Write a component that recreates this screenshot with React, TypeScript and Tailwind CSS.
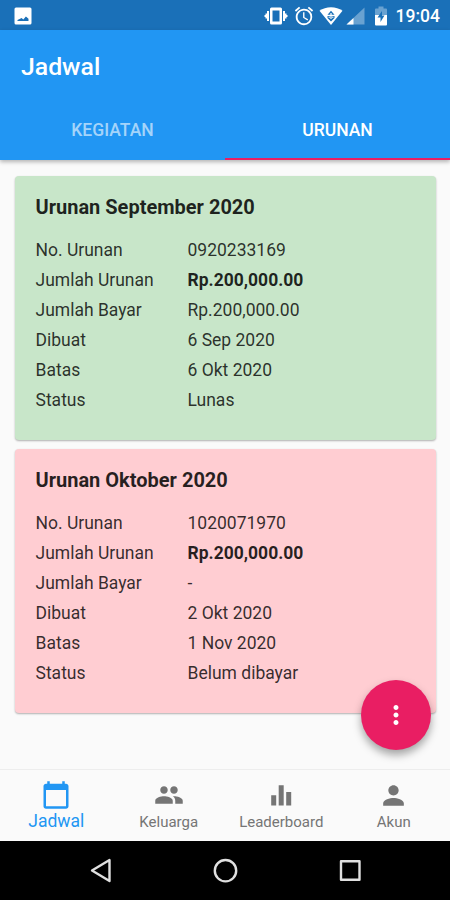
import React from 'react';
import { MdAlarm, MdMoreVert, MdPerson } from 'react-icons/md';

interface Urunan {
  title: string;
  color: string;
  rows: { label: string; value: string; bold?: boolean }[];
}

const urunanList: Urunan[] = [
  {
    title: 'Urunan September 2020',
    color: 'bg-[#c8e6c9]',
    rows: [
      { label: 'No. Urunan', value: '0920233169' },
      { label: 'Jumlah Urunan', value: 'Rp.200,000.00', bold: true },
      { label: 'Jumlah Bayar', value: 'Rp.200,000.00' },
      { label: 'Dibuat', value: '6 Sep 2020' },
      { label: 'Batas', value: '6 Okt 2020' },
      { label: 'Status', value: 'Lunas' },
    ],
  },
  {
    title: 'Urunan Oktober 2020',
    color: 'bg-[#ffcdd2]',
    rows: [
      { label: 'No. Urunan', value: '1020071970' },
      { label: 'Jumlah Urunan', value: 'Rp.200,000.00', bold: true },
      { label: 'Jumlah Bayar', value: '-' },
      { label: 'Dibuat', value: '2 Okt 2020' },
      { label: 'Batas', value: '1 Nov 2020' },
      { label: 'Status', value: 'Belum dibayar' },
    ],
  },
];

const StatusBar: React.FC = () => (
  <div className="flex h-[30px] items-center bg-[#1a70b8] pl-3.5 pr-[10px] pt-px text-white">
    <svg width="18" height="18" viewBox="0 0 18 18" fill="currentColor">
      <path fillRule="evenodd" d="M2 .5h14a1.5 1.5 0 0 1 1.5 1.5v14a1.5 1.5 0 0 1-1.5 1.5H2A1.5 1.5 0 0 1 .5 16V2A1.5 1.5 0 0 1 2 .5ZM3.5 14h11V11.8l-2.6-2.4-2.6 3-1.7-1.4L3.5 13V14Z" />
    </svg>
    <div className="ml-auto flex items-center">
      <svg width="24" height="20" viewBox="0 0 24 20" fill="currentColor">
        <path fillRule="evenodd" d="M7.5 1.5h9A1.5 1.5 0 0 1 18 3v14a1.5 1.5 0 0 1-1.5 1.5h-9A1.5 1.5 0 0 1 6 17V3a1.5 1.5 0 0 1 1.5-1.5ZM8.5 4.5v11h7v-11h-7Z" />
        <path d="M3 5h2v10H3v-2.5H1.5V11H.5V9h1V7.5H3V5ZM21 5h-2v10h2v-2.5h1.5V11h1V9h-1V7.5H21V5Z" />
      </svg>
      <MdAlarm className="ml-[5px] h-[22px] w-[22px]" />
      <svg className="ml-1" width="24" height="18" viewBox="0 0 24 18">
        <path d="M12 18 .5 3.8C3.7 1.5 7.7.3 12 .3s8.3 1.2 11.5 3.5L12 18Z" fill="currentColor" />
        <path d="m12 3.8-3.5 4h7l-3.5-4ZM8.5 9h7v2L12 14.5 8.5 11V9Z" fill="#1a70b8" />
        <path d="M11.4 6h1.2v6h-1.2zM9.7 9.5h1v1.5h-1zM13.3 9.5h1v1.5h-1z" fill="currentColor" />
      </svg>
      <svg className="ml-[3px]" width="19" height="18" viewBox="0 0 19 18" fill="currentColor">
        <path d="M18.5.5v17H.5l18-17Z" opacity=".35" />
        <path d="M7.5 10.9v6.6h-7l7-6.6Z" />
      </svg>
      <svg className="ml-[9px]" width="14" height="20" viewBox="0 0 14 20">
        <path d="M4.5.5h5v2H12a1 1 0 0 1 1 1V9.500H1v-6a1 1 0 0 1 1-1h2.500v-2Z" fill="#fff" opacity=".35" />
        <path d="M1 9h12v9.500a1 1 0 0 1-1 1H2a1 1 0 0 1-1-1V9Z" fill="#fff" />
        <path d="M8 5 3.500 11.500h3V16l4-6.500H8V5Z" fill="#1a70b8" />
      </svg>
      <span className="ml-2 text-[17.5px] font-medium leading-[30px]">19:04</span>
    </div>
  </div>
);

const AppBar: React.FC = () => (
  <div className="relative z-10 h-[130px] bg-[#2196f3] text-white shadow-[0_2px_4px_rgba(0,0,0,0.28)]">
    <h1 className="h-[70px] pl-[21px] pt-0.5 text-[24.8px] font-medium leading-[70px]">Jadwal</h1>
    <div className="grid h-[60px] grid-cols-2 text-center text-[17.5px] font-medium leading-[60px]">
      <div className="text-white/60">KEGIATAN</div>
      <div className="h-[60px] border-b-2 border-[#e91e63]">URUNAN</div>
    </div>
  </div>
);

const UrunanCard: React.FC<{ item: Urunan }> = ({ item }) => (
  <div className={`h-[264px] rounded-[4px] pl-[20.5px] pt-4 text-black/80 shadow-[0_1px_2px_rgba(0,0,0,0.3)] ${item.color}`}>
    <h2 className="mb-3 text-[20px] font-bold leading-[31px] text-black/85">{item.title}</h2>
    {item.rows.map((row) => (
      <div key={row.label} className="flex h-[30px] text-[17.5px] leading-[30px]">
        <span className="w-[152px]">{row.label}</span>
        <span className={row.bold ? 'font-bold text-black/85' : ''}>{row.value}</span>
      </div>
    ))}
  </div>
);

const BottomNav: React.FC = () => (
  <nav className="grid h-[72px] grid-cols-4 border-t border-[#ededed] bg-[#fafafa] pt-[10px] text-[15px] leading-5 text-[#757575]">
    <div className="flex flex-col items-center text-[17.5px] text-[#2196f3]">
      <svg width="30" height="30" viewBox="0 0 24 24" fill="currentColor">
        <path d="M20 3h-1V1h-2v2H7V1H5v2H4c-1.1 0-2 .9-2 2v16c0 1.1.9 2 2 2h16c1.1 0 2-.9 2-2V5c0-1.1-.9-2-2-2zm0 18H4V8h16v13z" />
      </svg>
      <span className="mt-px">Jadwal</span>
    </div>
    <div className="flex flex-col items-center">
      <svg width="30" height="30" viewBox="0 0 24 24" fill="currentColor">
        <path d="M16 11c1.66 0 2.99-1.34 2.99-3S17.66 5 16 5s-3 1.34-3 3 1.34 3 3 3zm-8 0c1.66 0 2.99-1.34 2.99-3S9.66 5 8 5 5 6.34 5 8s1.34 3 3 3zm0 2c-2.33 0-7 1.17-7 3.5V19h14v-2.5c0-2.33-4.67-3.5-7-3.5zm8 0c-.29 0-.62.02-.97.05 1.16.84 1.97 1.97 1.97 3.45V19h6v-2.5c0-2.33-4.67-3.5-7-3.5z" />
      </svg>
      <span className="mt-0.5">Keluarga</span>
    </div>
    <div className="flex flex-col items-center">
      <svg width="30" height="30" viewBox="0 0 30 30" fill="currentColor">
        <path d="M5.2 15.2h5V25.5h-5zM12.7 5.2h5v20.3h-5zM20.2 12h5v13.5h-5z" />
      </svg>
      <span className="mt-0.5">Leaderboard</span>
    </div>
    <div className="flex flex-col items-center">
      <MdPerson className="h-[31px] w-[31px]" />
      <span className="mt-px">Akun</span>
    </div>
  </nav>
);

const SystemNav: React.FC = () => (
  <div className="flex h-[59px] items-center justify-between bg-black px-[88px] text-[#e0e0e0]">
    <svg width="26" height="26" viewBox="0 0 26 26" fill="none" stroke="currentColor" strokeWidth="2.4" strokeLinejoin="round">
      <path d="M21.5 2v21L4 12.5 21.5 2Z" />
    </svg>
    <svg width="26" height="26" viewBox="0 0 26 26" fill="none" stroke="currentColor" strokeWidth="2.4">
      <circle cx="13.5" cy="12.7" r="10.7" />
    </svg>
    <svg width="26" height="26" viewBox="0 0 26 26" fill="none" stroke="currentColor" strokeWidth="2.4" strokeLinejoin="round">
      <path d="M5 3.3h18.5v18.5H5z" />
    </svg>
  </div>
);

export default function App() {
  return (
    <div className="relative flex h-[900px] w-[450px] flex-col overflow-hidden bg-[#fafafa] font-['Roboto',sans-serif]">
      <StatusBar />
      <AppBar />
      <main className="flex flex-1 flex-col gap-[9.8px] pl-[15px] pr-[14px] pt-[15.5px]">
        {urunanList.map((item) => (
          <UrunanCard key={item.title} item={item} />
        ))}
      </main>
      <button className="absolute bottom-[150px] right-[19.5px] flex h-[70px] w-[70px] items-center justify-center rounded-full bg-[#e91e63] text-white shadow-[0_5px_9px_rgba(0,0,0,0.35)]">
        <MdMoreVert className="h-[30px] w-[30px]" />
      </button>
      <BottomNav />
      <SystemNav />
    </div>
  );
}
